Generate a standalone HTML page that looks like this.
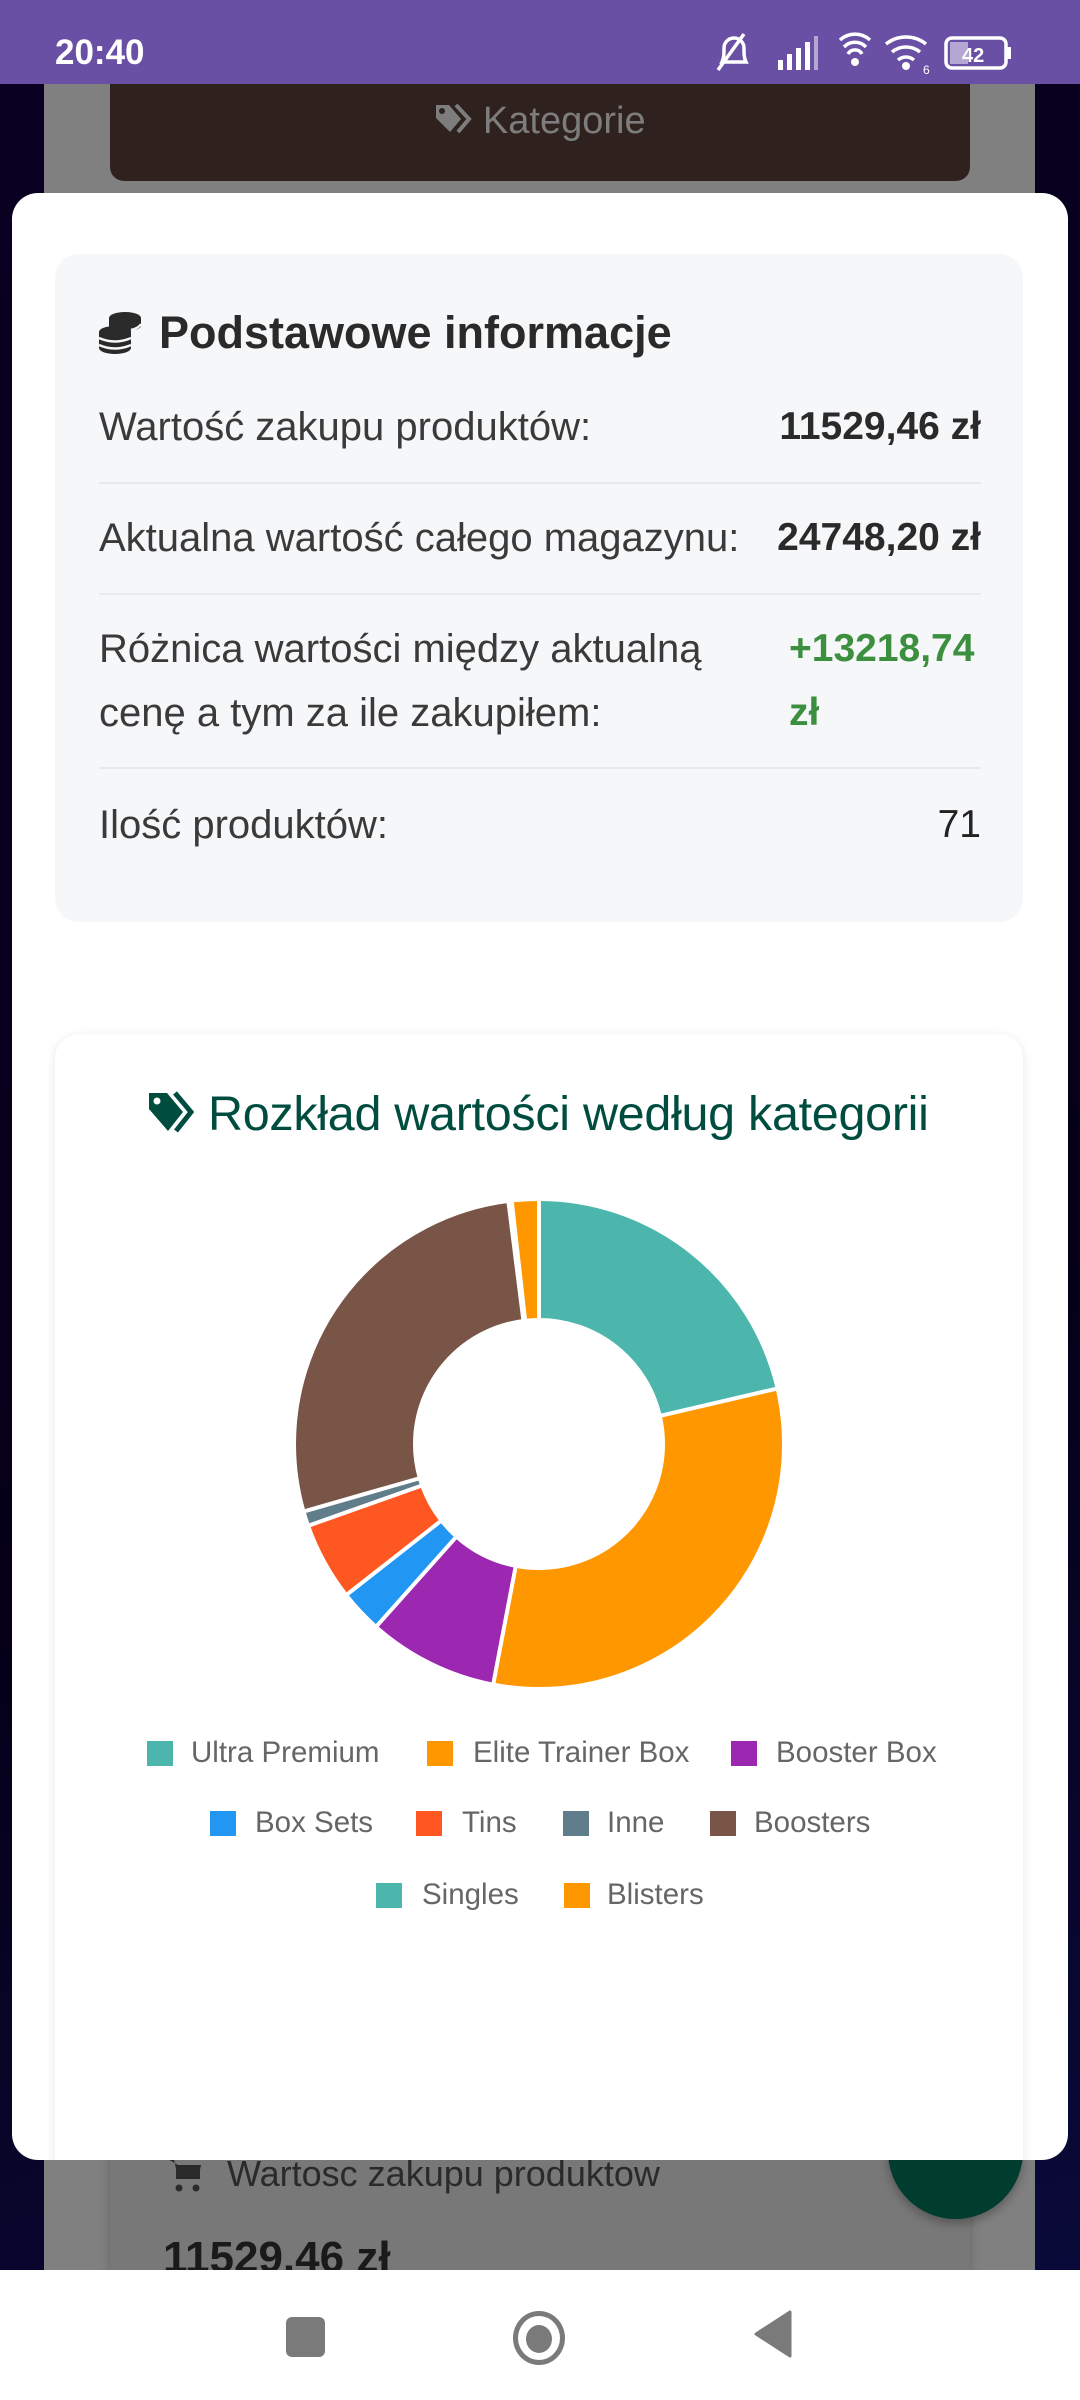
<!DOCTYPE html>
<html><head><meta charset="utf-8"><style>
*{margin:0;padding:0;box-sizing:border-box}
body{width:1080px;height:2400px;position:relative;overflow:hidden;background:#07001c;font-family:"Liberation Sans",sans-serif}
.a{position:absolute}
.lbl{position:absolute;left:99px;font-size:40px;color:#3a3a3a;font-weight:normal;white-space:nowrap}
.val{position:absolute;right:99px;font-size:39px;color:#2a2a2a;font-weight:bold;white-space:nowrap;text-align:right}
.div{position:absolute;left:99px;width:882px;height:2px;background:#e8e9ec}
.lg{position:absolute;font-size:29.5px;color:#666;white-space:nowrap;line-height:30px}
.sq{position:absolute;width:26px;height:25px}
</style></head><body>
<div class="a" style="left:0;top:84px;width:1080px;height:2190px;background:linear-gradient(160deg,#0a0022,#050018 60%,#0a0a3a)"></div>
<div class="a" style="left:44px;top:84px;width:991px;height:2190px;background:#808080"></div>
<div class="a" style="left:110px;top:84px;width:860px;height:97px;background:#2e211e;border-radius:0 0 14px 14px"></div>
<div class="a" style="left:110px;top:99px;width:860px;text-align:center;font-size:38px;color:#7d7d7d;line-height:44px">
<svg width="38" height="34" viewBox="0 0 38 34" style="vertical-align:-4px"><path d="M2 2h13l12 14-11 13L2 15z" fill="#7d7d7d"/><circle cx="8" cy="8" r="3" fill="#2e211e"/><path d="M22 2l13 14-11 13" stroke="#7d7d7d" stroke-width="4" fill="none"/></svg> Kategorie</div>
<div class="a" style="left:110px;top:2120px;width:860px;height:200px;background:#787878;box-shadow:0 0 10px rgba(0,0,0,.2)"></div>
<div class="a" style="left:168px;top:2155px;width:34px;height:40px">
<svg width="34" height="40" viewBox="0 0 34 40"><path d="M0 4h6l4 20h20l3-14H10" fill="#2a2a2a"/><rect x="8" y="10" width="24" height="14" fill="#2a2a2a"/><circle cx="11" cy="33" r="3.5" fill="#2a2a2a"/><circle cx="28" cy="33" r="3.5" fill="#2a2a2a"/></svg></div>
<div class="a" style="left:227px;top:2152px;font-size:36px;color:#2a2a2a;line-height:44px">Wartosc zakupu produktow</div>
<div class="a" style="left:163px;top:2230px;font-size:44px;color:#1a1a1a;font-weight:bold;line-height:56px">11529.46 zł</div>
<div class="a" style="left:888px;top:2084px;width:135px;height:135px;border-radius:50%;background:#003d2e;box-shadow:0 4px 10px rgba(0,0,0,.3)"></div>

<div class="a" style="left:0;top:0;width:1080px;height:84px;background:#6950a4"></div>
<div class="a" style="left:55px;top:32px;font-size:35px;color:#fff;font-weight:bold;line-height:42px">20:40</div>
<svg class="a" style="left:710px;top:30px" width="310" height="46" viewBox="0 0 310 46">
<g fill="none" stroke="#fff" stroke-width="3.5">
<path d="M12 32c2-4 2-8 2-14a10 10 0 0 1 20 0c0 6 0 10 2 14z"/><line x1="8" y1="40" x2="34" y2="4"/>
<path d="M130 10a22 22 0 0 1 30 0M134 17a15 15 0 0 1 22 0M138 24a8 8 0 0 1 14 0"/>
<path d="M176 14a32 32 0 0 1 40 0M182 22a22 22 0 0 1 28 0M188 30a12 12 0 0 1 16 0"/>
<rect x="236" y="8" width="60" height="30" rx="6"/></g>
<g fill="#fff"><rect x="68" y="30" width="5" height="10"/><rect x="77" y="24" width="5" height="16"/><rect x="86" y="18" width="5" height="22"/><rect x="95" y="12" width="5" height="28"/><rect x="104" y="6" width="4" height="34" opacity=".5"/>
<circle cx="145" cy="32" r="4"/><circle cx="196" cy="36" r="4"/><rect x="297" y="17" width="4" height="12"/><rect x="240" y="12" width="18" height="22" opacity=".5"/>
<text x="252" y="32" font-size="20" font-family="Liberation Sans" font-weight="bold">42</text><text x="213" y="44" font-size="12" font-family="Liberation Sans">6</text></g>
</svg>

<div class="a" style="left:12px;top:193px;width:1056px;height:1967px;background:#fff;border-radius:26px;overflow:hidden">
 <div class="a" style="left:43px;top:61px;width:968px;height:668px;background:#f6f7f9;border-radius:24px"></div>
 <div class="a" style="left:43px;top:841px;width:968px;height:1300px;background:#fff;border-radius:24px;box-shadow:0 2px 10px rgba(0,0,0,.1)"></div>
</div>
<svg class="a" style="left:97px;top:310px" width="46" height="46" viewBox="0 0 46 46"><g fill="#2a2a2a">
<ellipse cx="28" cy="8" rx="16" ry="6"/><rect x="12" y="8" width="32" height="8"/><ellipse cx="28" cy="16" rx="16" ry="5"/>
<ellipse cx="18" cy="22" rx="16" ry="6"/><rect x="2" y="22" width="32" height="16"/><ellipse cx="18" cy="38" rx="16" ry="6"/></g>
<g stroke="#f6f7f9" stroke-width="2.5" fill="none"><path d="M2 28q16 7 32 0M2 35q16 7 32 0M34 20q8-2 10-6"/></g></svg>
<div class="a" style="left:159px;top:307px;font-size:45px;font-weight:bold;color:#2a2a2a;line-height:52px">Podstawowe informacje</div>
<div class="lbl" style="top:405px;line-height:44px">Wartość zakupu produktów:</div>
<div class="val" style="top:405px;line-height:44px">11529,46 zł</div>
<div class="div" style="top:482px"></div>
<div class="lbl" style="top:516px;line-height:44px">Aktualna wartość całego magazynu:</div>
<div class="val" style="top:516px;line-height:44px">24748,20 zł</div>
<div class="div" style="top:593px"></div>
<div class="lbl" style="top:617px;line-height:64px">Różnica wartości między aktualną<br>cenę a tym za ile zakupiłem:</div>
<div class="a" style="left:789px;top:617px;width:210px;font-size:39px;font-weight:bold;color:#3b8f3e;line-height:64px">+13218,74<br>zł</div>
<div class="div" style="top:767px"></div>
<div class="lbl" style="top:803px;line-height:44px">Ilość produktów:</div>
<div class="val" style="top:803px;line-height:44px;font-weight:normal;color:#222">71</div>

<svg class="a" style="left:147px;top:1090px" width="50" height="44" viewBox="0 0 50 44"><path d="M2 3h18l16 19-15 19L2 19z" fill="#004d40"/><circle cx="10" cy="11" r="3.5" fill="#fff"/><path d="M28 3l16 19-15 19" stroke="#004d40" stroke-width="5" fill="none"/></svg>
<div class="a" style="left:208px;top:1086px;font-size:48.5px;color:#004d40;line-height:56px;white-space:nowrap;letter-spacing:-0.3px">Rozkład wartości według kategorii</div>

<svg class="a" style="left:0;top:0" width="1080" height="2000" viewBox="0 0 1080 2000">
<g transform="rotate(-90 539 1444)" fill="none" stroke-width="117">
<circle cx="539" cy="1444" r="184.5" stroke="#4db6ac" stroke-dasharray="247.6 2000" stroke-dashoffset="0"/>
<circle cx="539" cy="1444" r="184.5" stroke="#ff9800" stroke-dasharray="366.8 2000" stroke-dashoffset="-247.6"/>
<circle cx="539" cy="1444" r="184.5" stroke="#9c27b0" stroke-dasharray="99.5 2000" stroke-dashoffset="-614.4"/>
<circle cx="539" cy="1444" r="184.5" stroke="#2196f3" stroke-dasharray="32.8 2000" stroke-dashoffset="-713.9"/>
<circle cx="539" cy="1444" r="184.5" stroke="#ff5722" stroke-dasharray="59.9 2000" stroke-dashoffset="-746.8"/>
<circle cx="539" cy="1444" r="184.5" stroke="#607d8b" stroke-dasharray="11.3 2000" stroke-dashoffset="-806.5"/>
<circle cx="539" cy="1444" r="184.5" stroke="#795548" stroke-dasharray="318.1 2000" stroke-dashoffset="-817.7"/>
<circle cx="539" cy="1444" r="184.5" stroke="#ff9800" stroke-dasharray="23.2 2000" stroke-dashoffset="-1136"/>
</g>
<g stroke="#fff" stroke-width="4">
<line x1="539" y1="1444" x2="539" y2="1194"/><line x1="539" y1="1444" x2="782.5" y2="1387.3"/>
<line x1="539" y1="1444" x2="492.2" y2="1689.6"/><line x1="539" y1="1444" x2="372.7" y2="1630.6"/>
<line x1="539" y1="1444" x2="342.3" y2="1598.2"/><line x1="539" y1="1444" x2="303.4" y2="1527.5"/>
<line x1="539" y1="1444" x2="298.7" y2="1512.9"/><line x1="539" y1="1444" x2="507.7" y2="1196"/>
<line x1="539" y1="1444" x2="511.1" y2="1195.6"/></g>
</svg>

<div class="sq" style="left:147px;top:1741px;background:#4db6ac"></div><div class="lg" style="left:191px;top:1738px">Ultra Premium</div>
<div class="sq" style="left:427px;top:1741px;background:#ff9800"></div><div class="lg" style="left:473px;top:1738px">Elite Trainer Box</div>
<div class="sq" style="left:731px;top:1741px;background:#9c27b0"></div><div class="lg" style="left:776px;top:1738px">Booster Box</div>
<div class="sq" style="left:210px;top:1811px;background:#2196f3"></div><div class="lg" style="left:255px;top:1808px">Box Sets</div>
<div class="sq" style="left:416px;top:1811px;background:#ff5722"></div><div class="lg" style="left:462px;top:1808px">Tins</div>
<div class="sq" style="left:563px;top:1811px;background:#607d8b"></div><div class="lg" style="left:607px;top:1808px">Inne</div>
<div class="sq" style="left:710px;top:1811px;background:#795548"></div><div class="lg" style="left:754px;top:1808px">Boosters</div>
<div class="sq" style="left:376px;top:1883px;background:#4db6ac"></div><div class="lg" style="left:422px;top:1880px">Singles</div>
<div class="sq" style="left:564px;top:1883px;background:#ff9800"></div><div class="lg" style="left:607px;top:1880px">Blisters</div>

<div class="a" style="left:0;top:2270px;width:1080px;height:130px;background:#fff"></div>
<div class="a" style="left:286px;top:2317px;width:39px;height:40px;background:#7a7a7a;border-radius:6px"></div>
<div class="a" style="left:513px;top:2311px;width:52px;height:54px;border-radius:50%;border:5px solid #7a7a7a"></div>
<div class="a" style="left:526px;top:2325px;width:26px;height:28px;border-radius:50%;background:#7a7a7a"></div>
<svg class="a" style="left:752px;top:2310px" width="40" height="48" viewBox="0 0 40 48"><path d="M38 2v44L4 24z" fill="#7a7a7a" stroke="#7a7a7a" stroke-width="3" stroke-linejoin="round"/></svg>
</body></html>
